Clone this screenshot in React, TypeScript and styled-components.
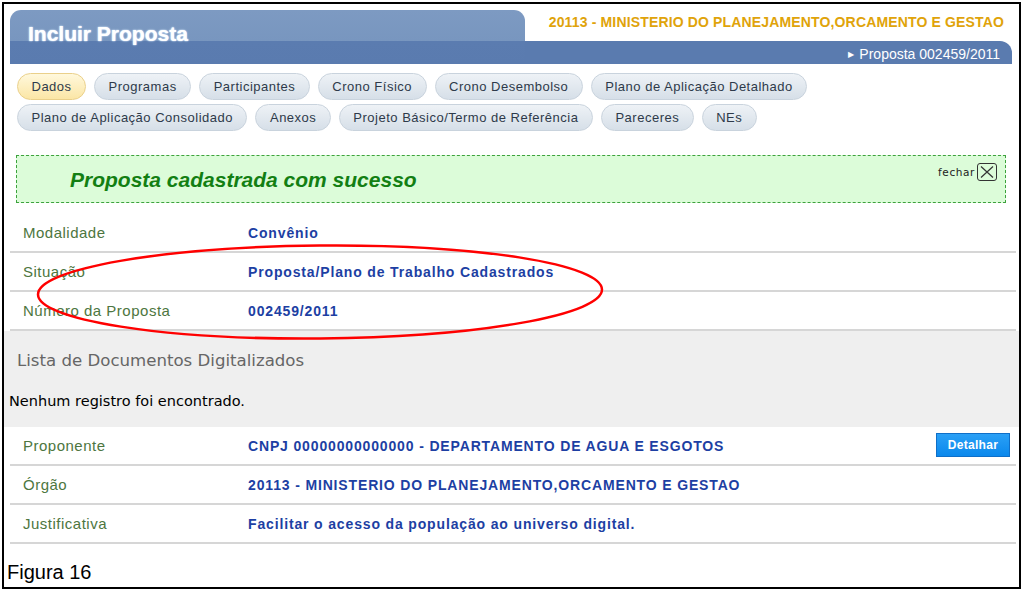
import React from 'react';
import styled, { createGlobalStyle } from 'styled-components';

const GlobalStyle = createGlobalStyle`
  html, body {
    margin: 0;
    padding: 0;
    background: #fff;
  }
  body {
    font-family: 'Liberation Sans', Arial, sans-serif;
  }
`;

const tabRows = [
  [
    { id: 1, title: 'Dados', active: true },
    { id: 2, title: 'Programas' },
    { id: 3, title: 'Participantes' },
    { id: 4, title: 'Crono Físico' },
    { id: 5, title: 'Crono Desembolso' },
    { id: 6, title: 'Plano de Aplicação Detalhado' },
  ],
  [
    { id: 7, title: 'Plano de Aplicação Consolidado' },
    { id: 8, title: 'Anexos' },
    { id: 9, title: 'Projeto Básico/Termo de Referência' },
    { id: 10, title: 'Pareceres' },
    { id: 11, title: 'NEs' },
  ],
];

const summary = [
  { label: 'Modalidade', value: 'Convênio' },
  { label: 'Situação', value: 'Proposta/Plano de Trabalho Cadastrados' },
  { label: 'Número da Proposta', value: '002459/2011' },
];

const details = [
  {
    label: 'Proponente',
    value: 'CNPJ 00000000000000 - DEPARTAMENTO DE AGUA E ESGOTOS',
    action: 'Detalhar',
  },
  { label: 'Órgão', value: '20113 - MINISTERIO DO PLANEJAMENTO,ORCAMENTO E GESTAO' },
  { label: 'Justificativa', value: 'Facilitar o acesso da população ao universo digital.' },
];

const Frame = styled.div`
  position: relative;
  box-sizing: border-box;
  margin: 2px;
  width: 1019px;
  height: 587px;
  border: 2px solid #000;
  display: flex;
  flex-direction: column;
  overflow: hidden;
`;

const Content = styled.div`
  padding: 6px 3px 0 6px;
`;

const Header = styled.div`
  display: flex;
  height: 54px;
`;

const TitleTab = styled.div`
  box-sizing: border-box;
  width: 515px;
  height: 54px;
  border-radius: 11px 11px 0 0;
  background: linear-gradient(#7d9ac2 0, #7896bf 31px, #5b7cb0 31px, #5a7baf 100%);
  padding: 12px 0 0 18px;
  font-size: 21px;
  font-weight: bold;
  color: #fff;
  text-shadow: 0 0 2px #dff0ff, 0 0 1px #c8e0ff;
`;

const HeaderRight = styled.div`
  flex: 1;
  display: flex;
  flex-direction: column;
  margin-right: 4px;
`;

const OrgName = styled.div`
  height: 31px;
  box-sizing: border-box;
  padding: 4px 8px 0 0;
  text-align: right;
  font-size: 14px;
  letter-spacing: 0.15px;
  font-weight: bold;
  color: #e0a30a;
`;

const Breadcrumb = styled.div`
  flex: 1;
  display: flex;
  align-items: center;
  justify-content: flex-end;
  gap: 5px;
  padding: 3px 12px 0 0;
  background: #5a7baf;
  border-radius: 0 12px 0 0;
  font-size: 14px;
  color: #fff;
`;

const Arrow = styled.span`
  font-size: 8px;
`;

const TabGroup = styled.div`
  display: flex;
  flex-direction: column;
  gap: 4px;
  margin: 9px 0 0 7px;
`;

const TabRow = styled.div`
  display: flex;
  gap: 8px;
`;

const Tab = styled.div<{ $active?: boolean }>`
  box-sizing: border-box;
  height: 27px;
  line-height: 25px;
  padding: 0 13.5px;
  border-radius: 14px;
  font-size: 13px;
  letter-spacing: 0.5px;
  color: #2e3a4a;
  border: 1px solid ${({ $active }) => ($active ? '#ead08a' : '#c9d3dd')};
  background: ${({ $active }) =>
    $active
      ? 'linear-gradient(#fff8dc, #fbe6a6)'
      : 'linear-gradient(#eef2f6, #d6dfe8)'};
`;

const Notice = styled.div`
  display: flex;
  justify-content: space-between;
  box-sizing: border-box;
  height: 48px;
  margin: 24px 10px 0 6px;
  border: 1px dashed #3da23d;
  background: #dcfcd9;
  padding: 0 8px 0 53px;
`;

const NoticeText = styled.div`
  padding-top: 12px;
  font-size: 21px;
  font-weight: bold;
  font-style: italic;
  color: #137f13;
`;

const CloseLink = styled.div`
  display: flex;
  align-items: flex-start;
  gap: 2px;
  padding-top: 7px;
  font-family: 'DejaVu Sans', sans-serif;
  font-size: 10.5px;
  letter-spacing: 0.6px;
  color: #222;
  line-height: 18px;
`;

const CloseBox = styled.span`
  display: flex;
  align-items: center;
  justify-content: center;
  box-sizing: border-box;
  width: 20px;
  height: 18px;
  border: 1px solid #333;
  border-radius: 3px;
`;

const InfoTable = styled.div<{ $top?: number }>`
  margin-top: ${({ $top }) => $top || 0}px;
`;

const InfoRow = styled.div`
  display: flex;
  align-items: center;
  box-sizing: border-box;
  height: 39px;
  border-bottom: 2px solid #d6d6d6;
  padding: 0 6px 0 13px;
`;

const Label = styled.div`
  width: 225px;
  font-size: 15px;
  letter-spacing: 0.5px;
  color: #4d7640;
`;

const Value = styled.div`
  flex: 1;
  font-size: 14px;
  letter-spacing: 0.85px;
  font-weight: bold;
  color: #1d3fa3;
`;

const DetailButton = styled.button`
  box-sizing: border-box;
  width: 74px;
  height: 24px;
  border: 1px solid #0f6fc8;
  background: linear-gradient(#2aa0f6, #0b88ec);
  color: #fff;
  font-family: 'Liberation Sans', Arial, sans-serif;
  font-size: 12px;
  letter-spacing: 0.3px;
  font-weight: bold;
  padding: 0;
  margin-top: -2px;
`;

const DocSection = styled.div`
  box-sizing: border-box;
  height: 96px;
  background: #efefef;
  padding: 20px 0 0 5px;
  font-family: 'DejaVu Sans', sans-serif;
`;

const DocTitle = styled.div`
  padding-left: 8px;
  font-size: 16.6px;
  color: #666;
`;

const EmptyText = styled.div`
  margin-top: 23px;
  font-size: 14.5px;
  color: #000;
`;

const Caption = styled.div`
  margin-top: auto;
  padding: 0 0 3px 3px;
  font-size: 20px;
  color: #000;
`;

const Highlight = styled.svg`
  position: absolute;
  left: 0;
  top: 0;
  pointer-events: none;
`;

const CloseIcon: React.FC = () => (
  <svg width="14" height="12" viewBox="0 0 14 12">
    <path d="M1 0.5 L13 11.5 M13 0.5 L1 11.5" stroke="#333" strokeWidth="1.2" fill="none" />
  </svg>
);

const App: React.FC = () => {
  return (
    <>
      <GlobalStyle />
      <Frame>
        <Content>
          <Header>
            <TitleTab>Incluir Proposta</TitleTab>
            <HeaderRight>
              <OrgName>20113 - MINISTERIO DO PLANEJAMENTO,ORCAMENTO E GESTAO</OrgName>
              <Breadcrumb>
                <Arrow>▶</Arrow>
                Proposta 002459/2011
              </Breadcrumb>
            </HeaderRight>
          </Header>

          <TabGroup>
            {tabRows.map((row, i) => (
              <TabRow key={i}>
                {row.map((tab) => (
                  <Tab key={tab.id} $active={tab.active}>
                    {tab.title}
                  </Tab>
                ))}
              </TabRow>
            ))}
          </TabGroup>

          <Notice>
            <NoticeText>Proposta cadastrada com sucesso</NoticeText>
            <CloseLink>
              fechar
              <CloseBox>
                <CloseIcon />
              </CloseBox>
            </CloseLink>
          </Notice>

          <InfoTable $top={11}>
            {summary.map((row) => (
              <InfoRow key={row.label}>
                <Label>{row.label}</Label>
                <Value>{row.value}</Value>
              </InfoRow>
            ))}
          </InfoTable>
        </Content>

        <DocSection>
          <DocTitle>Lista de Documentos Digitalizados</DocTitle>
          <EmptyText>Nenhum registro foi encontrado.</EmptyText>
        </DocSection>

        <Content style={{ paddingTop: 0 }}>
          <InfoTable>
            {details.map((row) => (
              <InfoRow key={row.label}>
                <Label>{row.label}</Label>
                <Value>{row.value}</Value>
                {row.action && <DetailButton>{row.action}</DetailButton>}
              </InfoRow>
            ))}
          </InfoTable>
        </Content>

        <Caption>Figura 16</Caption>

        <Highlight width="1019" height="587" viewBox="0 0 1019 587">
          <ellipse
            cx="316"
            cy="288"
            rx="282"
            ry="46.5"
            transform="rotate(-0.5 316 288)"
            fill="none"
            stroke="#f00"
            strokeWidth="2.5"
          />
        </Highlight>
      </Frame>
    </>
  );
};

export default App;
